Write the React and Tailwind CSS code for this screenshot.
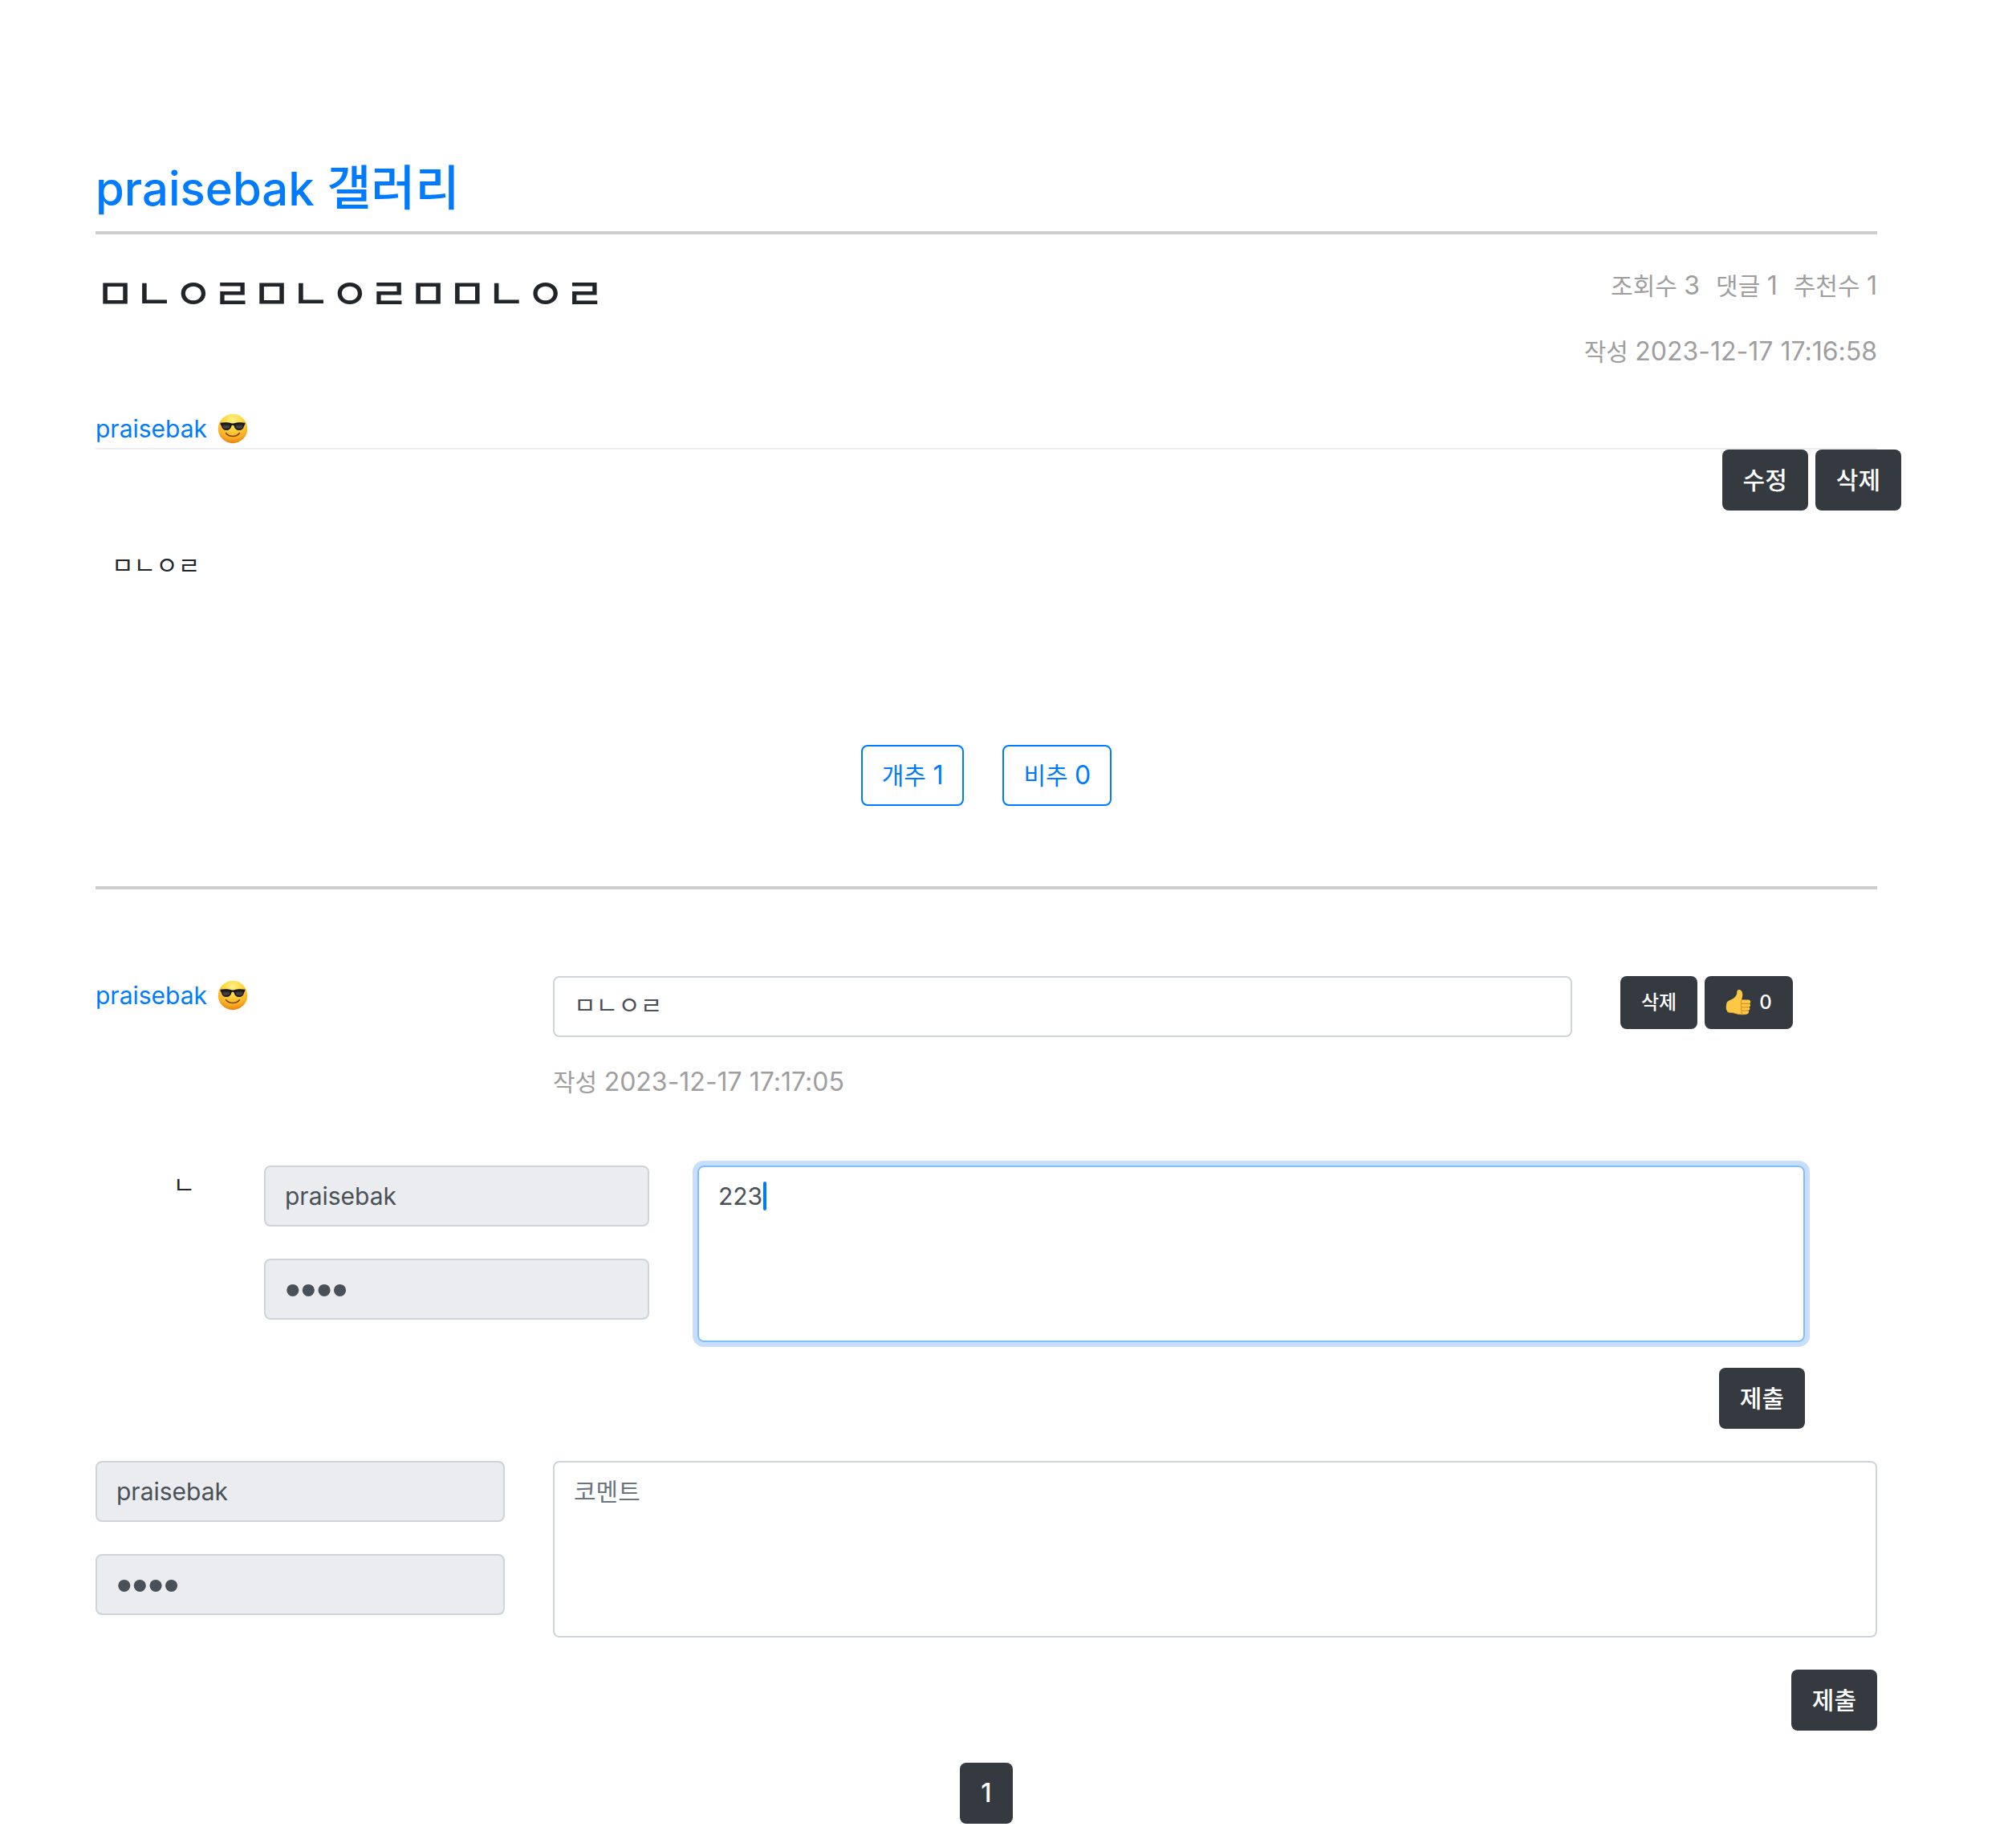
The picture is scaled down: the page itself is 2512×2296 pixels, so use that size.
const control =
  "block w-full rounded-lg border-2 px-6 text-[#495057] placeholder:text-[#6c757d] outline-none";
const plainBorder = " border-[#ced4da]";
const darkButton =
  "h-[76px] rounded-lg bg-[#343a40] px-[26px] font-medium text-white whitespace-nowrap";
const smallButton =
  "flex h-[66px] items-center gap-2.5 rounded-lg bg-[#343a40] px-[26px] text-2xl font-medium text-white whitespace-nowrap";
const voteButton =
  "h-[76px] rounded-lg border-2 border-[#007bff] px-6 text-[#007bff] whitespace-nowrap";

function CoolFace() {
  return (
    <svg viewBox="0 0 40 40" className="size-10" aria-hidden="true">
      <defs>
        <radialGradient id="face" cx="0.5" cy="0.2" r="0.82">
          <stop offset="0" stopColor="#fff08a" />
          <stop offset="0.35" stopColor="#fedb45" />
          <stop offset="0.75" stopColor="#fdb024" />
          <stop offset="1" stopColor="#e67c10" />
        </radialGradient>
        <linearGradient id="lens" x1="0" y1="0" x2="0" y2="1">
          <stop offset="0" stopColor="#1c1c1c" />
          <stop offset="0.6" stopColor="#4a4a4a" />
          <stop offset="1" stopColor="#222" />
        </linearGradient>
      </defs>
      <circle cx="20" cy="20" r="18.2" fill="url(#face)" />
      <path d="M11.5 25.5c2.200 3 5.200 4 8.500 4s6.300-1 8.500-4" fill="none" stroke="#7d430c" strokeWidth="1.500" strokeLinecap="round" />
      <path d="M4.500 12.800c4.500-1 10-.8 13.500.4 1.300.4 2.700.4 4 0 3.500-1.200 9-1.400 13.500-.4l-.3 2.200c-.8.500-1 1.300-1.300 2.300-.9 3.500-3 4.800-6 4.700-3.600-.1-5.500-2.100-6.300-5.300-.3-1.300-2.900-1.300-3.200 0-.8 3.200-2.700 5.200-6.300 5.300-3 .1-5.100-1.200-6-4.700-.3-1-.5-1.800-1.300-2.300z" fill="#151515" />
      <path d="M7.300 14.500c3-.6 6.500-.5 9.500.4-.3 3.900-2.200 5.900-5.200 6-2.900 0-4.400-2.100-4.300-6.400zM32.700 14.500c-3-.6-6.500-.5-9.500.4.3 3.900 2.200 5.900 5.200 6 2.900 0 4.400-2.100 4.300-6.400z" fill="url(#lens)" />
    </svg>
  );
}

function ThumbUp() {
  return (
    <svg viewBox="0 0 32 34" className="h-[34px] w-8" aria-hidden="true">
      <path d="M1.500 17.500c1-2.500 4.500-3.300 7.200-4.900 3.300-2 5.600-4.600 5.600-8.100C14.300 2 15.300 1 16.600 1c3 0 4.700 2.600 4.700 6 0 2.500-.8 4.500-1.200 6.500h8.400c1.700 0 2.700 1.200 2.700 2.500 0 1.100-.5 1.900-1.300 2.300.8.500 1.100 1.200 1.100 2 0 1.300-.7 2.100-1.500 2.500.6.500.9 1.100.9 1.800 0 1.300-.8 2.100-1.900 2.400.4.500.6 1 .6 1.600 0 1.900-1.500 2.800-3.700 3.100-3 .4-6.800.4-10-.4-3-.8-5.300-1.800-8.500-1.800C2.500 29.500.8 27 .8 23c0-2.200.2-4 .7-5.500z" fill="#fdc945" />
      <path d="M20.500 18.300H30M20.500 22.800h9M20.500 27.200h8M20 14.500c-1.300.7-1 3 .5 3.800-1.500.8-1.500 3.600 0 4.500-1.400.9-1.300 3.600 0 4.400-1 .8-.9 2.600.3 3.500" fill="none" stroke="#dc9322" strokeWidth="1.200" strokeLinecap="round" />
      <path d="M2 28c1.500 1.400 4 1.200 6.500 1.500 3 .5 5.500 1.900 9.500 2.200 3 .2 6 .1 8.500-.4" fill="none" stroke="#e09a25" strokeWidth="1" />
    </svg>
  );
}

function Author() {
  return (
    <a href="#author" className="flex items-center gap-3 text-[#007bff]">
      praisebak <CoolFace />
    </a>
  );
}

function Num({ children }) {
  return <span className="text-[32px]">{children}</span>;
}

function Credentials({ name }) {
  return (
    <div className="col-span-3 flex flex-col gap-10">
      <input aria-label="닉네임" disabled defaultValue="praisebak" className={control + plainBorder + " h-[76px] bg-[#eaecef]"} name={name + "-nick"} />
      <input aria-label="비밀번호" type="password" disabled defaultValue="1234" className={control + plainBorder + " h-[76px] bg-[#eaecef] font-['Liberation_Sans',sans-serif] text-[56px]"} name={name + "-pw"} />
    </div>
  );
}

export default function App() {
  return (
    <main className="min-h-screen bg-white pt-[196px] pr-[173px] pb-6 pl-[119px] font-['Inter','Noto_Sans_CJK_KR',sans-serif] text-[30px] leading-[48px] text-[#212529]">
      <header className="border-b-4 border-[#cecece] pb-[15px]">
        <h1 className="text-[60px] leading-[76px] font-medium text-[#007bff]">
          <a href="#gallery"><span className="text-[58px]">praisebak </span>갤러리</a>
        </h1>
      </header>

      <section className="border-b-2 border-[#eeeeee]">
        <div className="flex items-start justify-between pt-10">
          <h2 className="text-[53px] leading-[70px] font-medium">ㅁㄴㅇㄹㅁㄴㅇㄹㅁㅁㄴㅇㄹ</h2>
          <div className="flex flex-col items-end gap-[34px] text-[#9e9e9e]">
            <p className="flex gap-5">
              <span>조회수 <Num>3</Num></span>
              <span>댓글 <Num>1</Num></span>
              <span>추천수 <Num>1</Num></span>
            </p>
            <p>작성 <Num>2023-12-17 17:16:58</Num></p>
          </div>
        </div>
        <div className="flex pt-12">
          <Author />
        </div>
      </section>

      <div className="-mr-[30px] flex justify-end gap-[9px]">
        <button type="button" className={darkButton}>수정</button>
        <button type="button" className={darkButton}>삭제</button>
      </div>

      <p className="px-5 pt-11">ㅁㄴㅇㄹ</p>

      <div className="flex justify-center gap-12 pt-[200px] pb-[100px]">
        <button type="button" className={voteButton}>개추 <Num>1</Num></button>
        <button type="button" className={voteButton}>비추 <Num>0</Num></button>
      </div>

      <section className="border-t-4 border-[#cecece] pt-[108px]">
        <article className="grid grid-cols-12 gap-x-[60px]">
          <div className="col-span-3 flex items-start">
            <Author />
          </div>
          <div className="col-span-7">
            <textarea aria-label="댓글" readOnly defaultValue="ㅁㄴㅇㄹ" className={control + plainBorder + " h-[76px] resize-none overflow-hidden py-2.5"} />
            <p className="pt-8 text-[#9e9e9e]">작성 <Num>2023-12-17 17:17:05</Num></p>
          </div>
          <div className="col-span-2 flex items-start gap-[9px]">
            <button type="button" className={smallButton}>삭제</button>
            <button type="button" className={smallButton}>
              <ThumbUp /> 0
            </button>
          </div>
        </article>

        <form className="grid grid-cols-12 gap-x-[60px] pt-20 pr-[90px] pl-[30px]">
          <p className="text-right">
            <span className="pr-[26px]">ㄴ</span>
          </p>
          <Credentials name="reply" />
          <div className="col-span-8 flex flex-col items-end gap-8">
            <div className="relative w-full">
              <textarea aria-label="답글" defaultValue="223" className={control + " h-[220px] resize-none border-[#80bdff] py-3 ring-[6px] ring-[#c8deff]"} />
              <span className="absolute top-5 left-[82px] h-9 w-1 rounded-full bg-[#007aff]" />
            </div>
            <button type="button" className={darkButton}>제출</button>
          </div>
        </form>

        <form className="grid grid-cols-12 gap-x-[60px] pt-10">
          <Credentials name="comment" />
          <div className="col-span-9 flex flex-col items-end gap-10">
            <textarea aria-label="코멘트" placeholder="코멘트" className={control + plainBorder + " h-[220px] resize-none py-3"} />
            <button type="button" className={darkButton}>제출</button>
          </div>
        </form>

        <nav className="flex justify-center pt-10">
          <button type="button" className={darkButton}><Num>1</Num></button>
        </nav>
      </section>
    </main>
  );
}
